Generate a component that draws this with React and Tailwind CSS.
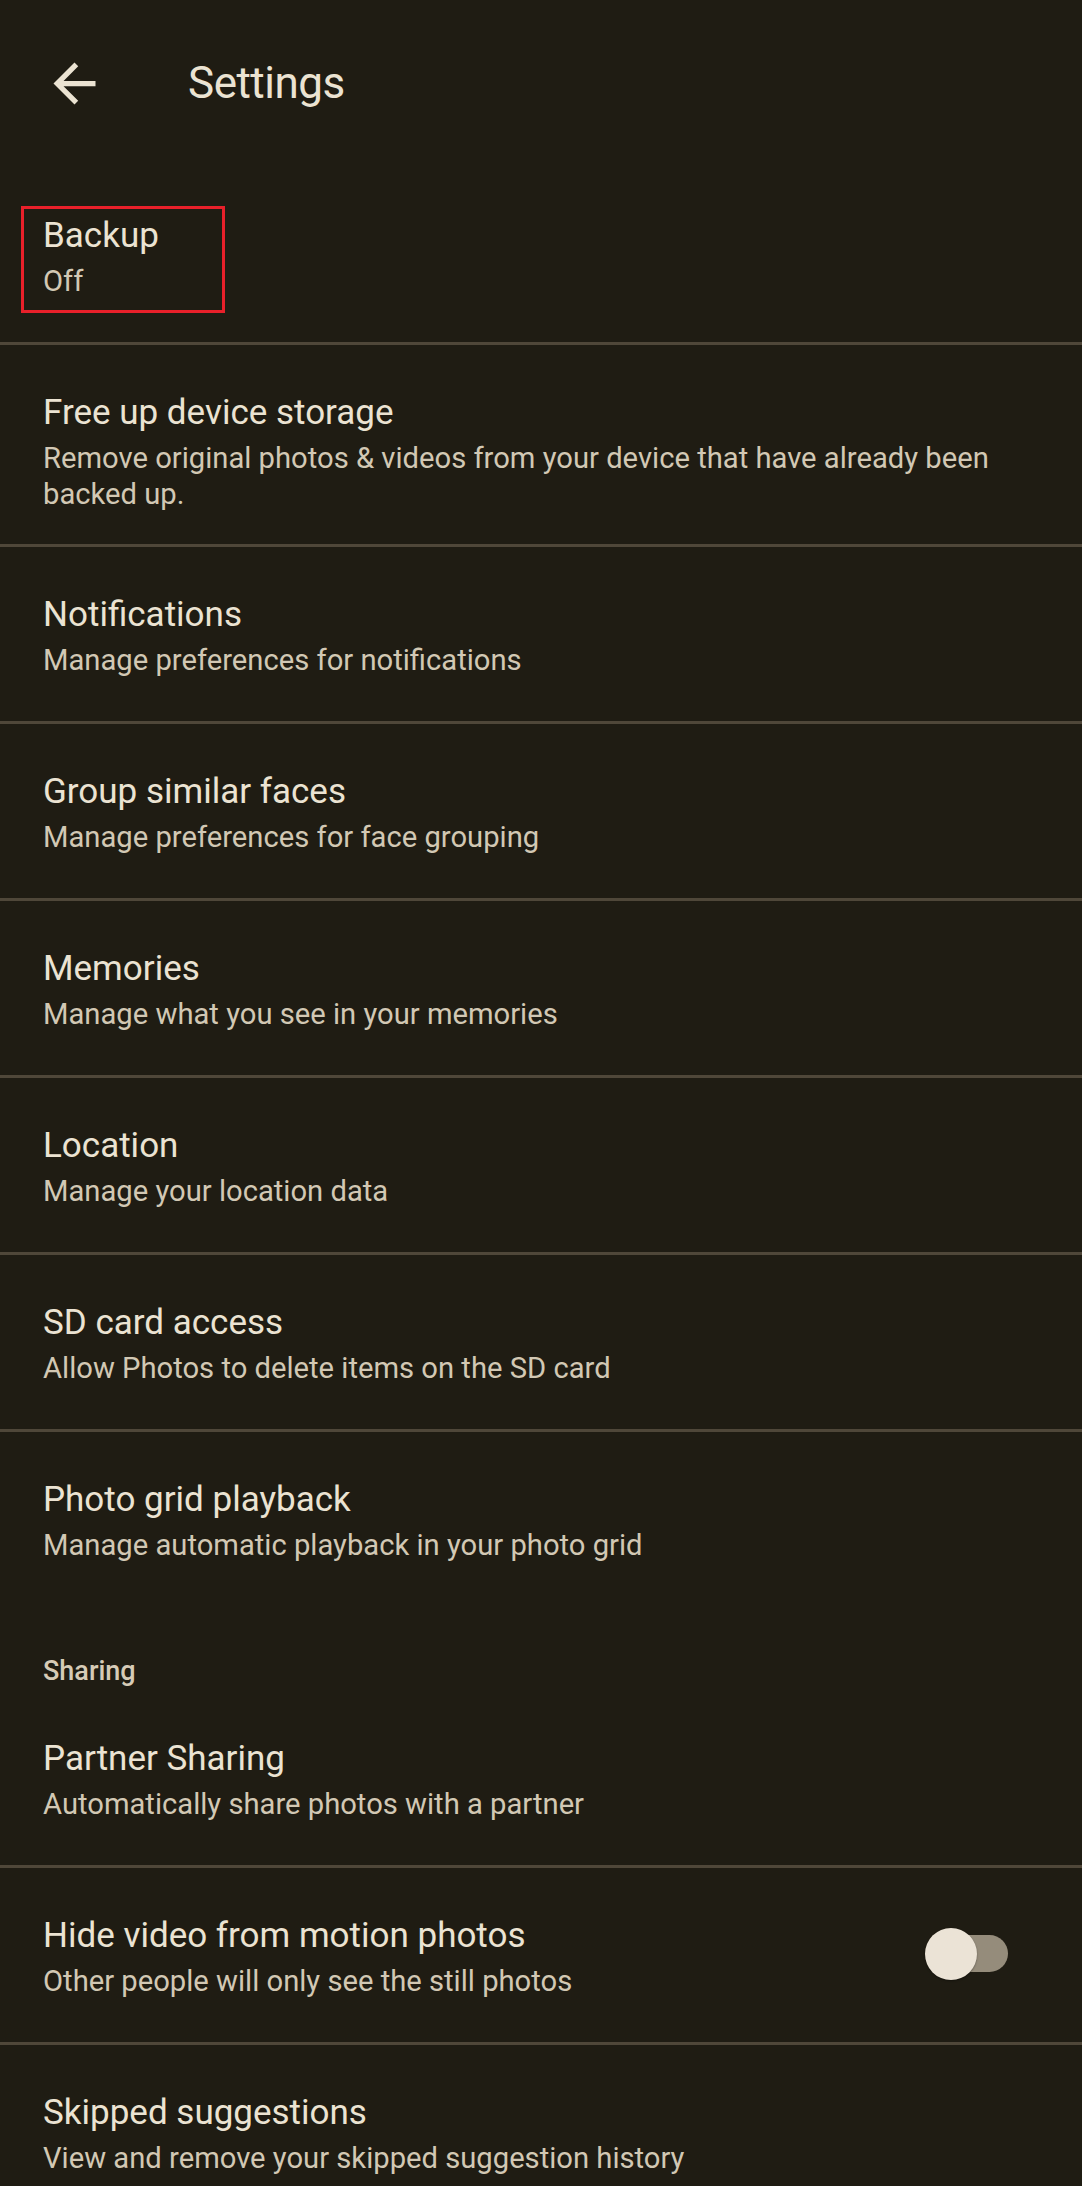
const FONT = { fontFamily: 'Roboto, "Noto Sans", sans-serif' };

const general = [
  { title: 'Free up device storage', sub: 'Remove original photos & videos from your device that have already been backed up.' },
  { title: 'Notifications', sub: 'Manage preferences for notifications' },
  { title: 'Group similar faces', sub: 'Manage preferences for face grouping' },
  { title: 'Memories', sub: 'Manage what you see in your memories' },
  { title: 'Location', sub: 'Manage your location data' },
  { title: 'SD card access', sub: 'Allow Photos to delete items on the SD card' },
];

const BackArrow = () => (
  <svg width="63" height="63" viewBox="0 0 24 24" className="shrink-0">
    <path fill="#ebe3d2" d="M20 11H7.83l5.59-5.59L12 4l-8 8 8 8 1.41-1.41L7.83 13H20v-2z" />
  </svg>
);

const Toggle = () => (
  <div className="relative w-[83px] h-[52px] mr-[74px] mb-[2px] self-center shrink-0">
    <div className="absolute left-[7px] top-[7px] w-[76px] h-[37px] rounded-full bg-[#958c7b]" />
    <div className="absolute left-0 top-0 w-[52px] h-[52px] rounded-full bg-[#ebe3d6] shadow-[0_1px_2px_rgba(0,0,0,0.35)]" />
  </div>
);

const Row = ({ title, sub, divider = true, toggle = false, children }) => (
  <div className={`relative flex ${divider ? 'min-h-[177px] border-b-[3px] border-[#4f4739]' : 'min-h-[174px]'}`}>
    <div className="flex-1 pl-[43px] pr-[43px] pt-[44px] pb-[32px]">
      <div className="text-[35px] leading-[48px] text-[#ebe3d2]">{title}</div>
      <div className="mt-[3px] text-[29.2px] leading-[36px] text-[#d2c8b4]">{sub}</div>
    </div>
    {toggle && <Toggle />}
    {children}
  </div>
);

export default function App() {
  return (
    <div className="w-[1082px] min-h-[2186px] bg-[#1f1c13] overflow-hidden" style={FONT}>
      <div className="h-[168px] pb-[2px] pl-[43px] flex items-center">
        <BackArrow />
        <div className="ml-[82px] text-[44px] leading-[56px] tracking-[-0.5px] text-[#ebe3d2]">Settings</div>
      </div>

      <Row title="Backup" sub="Off">
        <div className="absolute left-[21px] top-[38px] w-[204px] h-[107px] border-[3px] border-[#e8202a]" />
      </Row>

      {general.map((r) => (
        <Row key={r.title} title={r.title} sub={r.sub} />
      ))}

      <Row title="Photo grid playback" sub="Manage automatic playback in your photo grid" divider={false} />

      <div className="pl-[43px] pt-[47px] pb-[2px] text-[27px] leading-[36px] font-medium text-[#d6cbb7]">
        Sharing
      </div>

      <Row title="Partner Sharing" sub="Automatically share photos with a partner" />
      <Row title="Hide video from motion photos" sub="Other people will only see the still photos" toggle />
      <Row title="Skipped suggestions" sub="View and remove your skipped suggestion history" divider={false} />
    </div>
  );
}
